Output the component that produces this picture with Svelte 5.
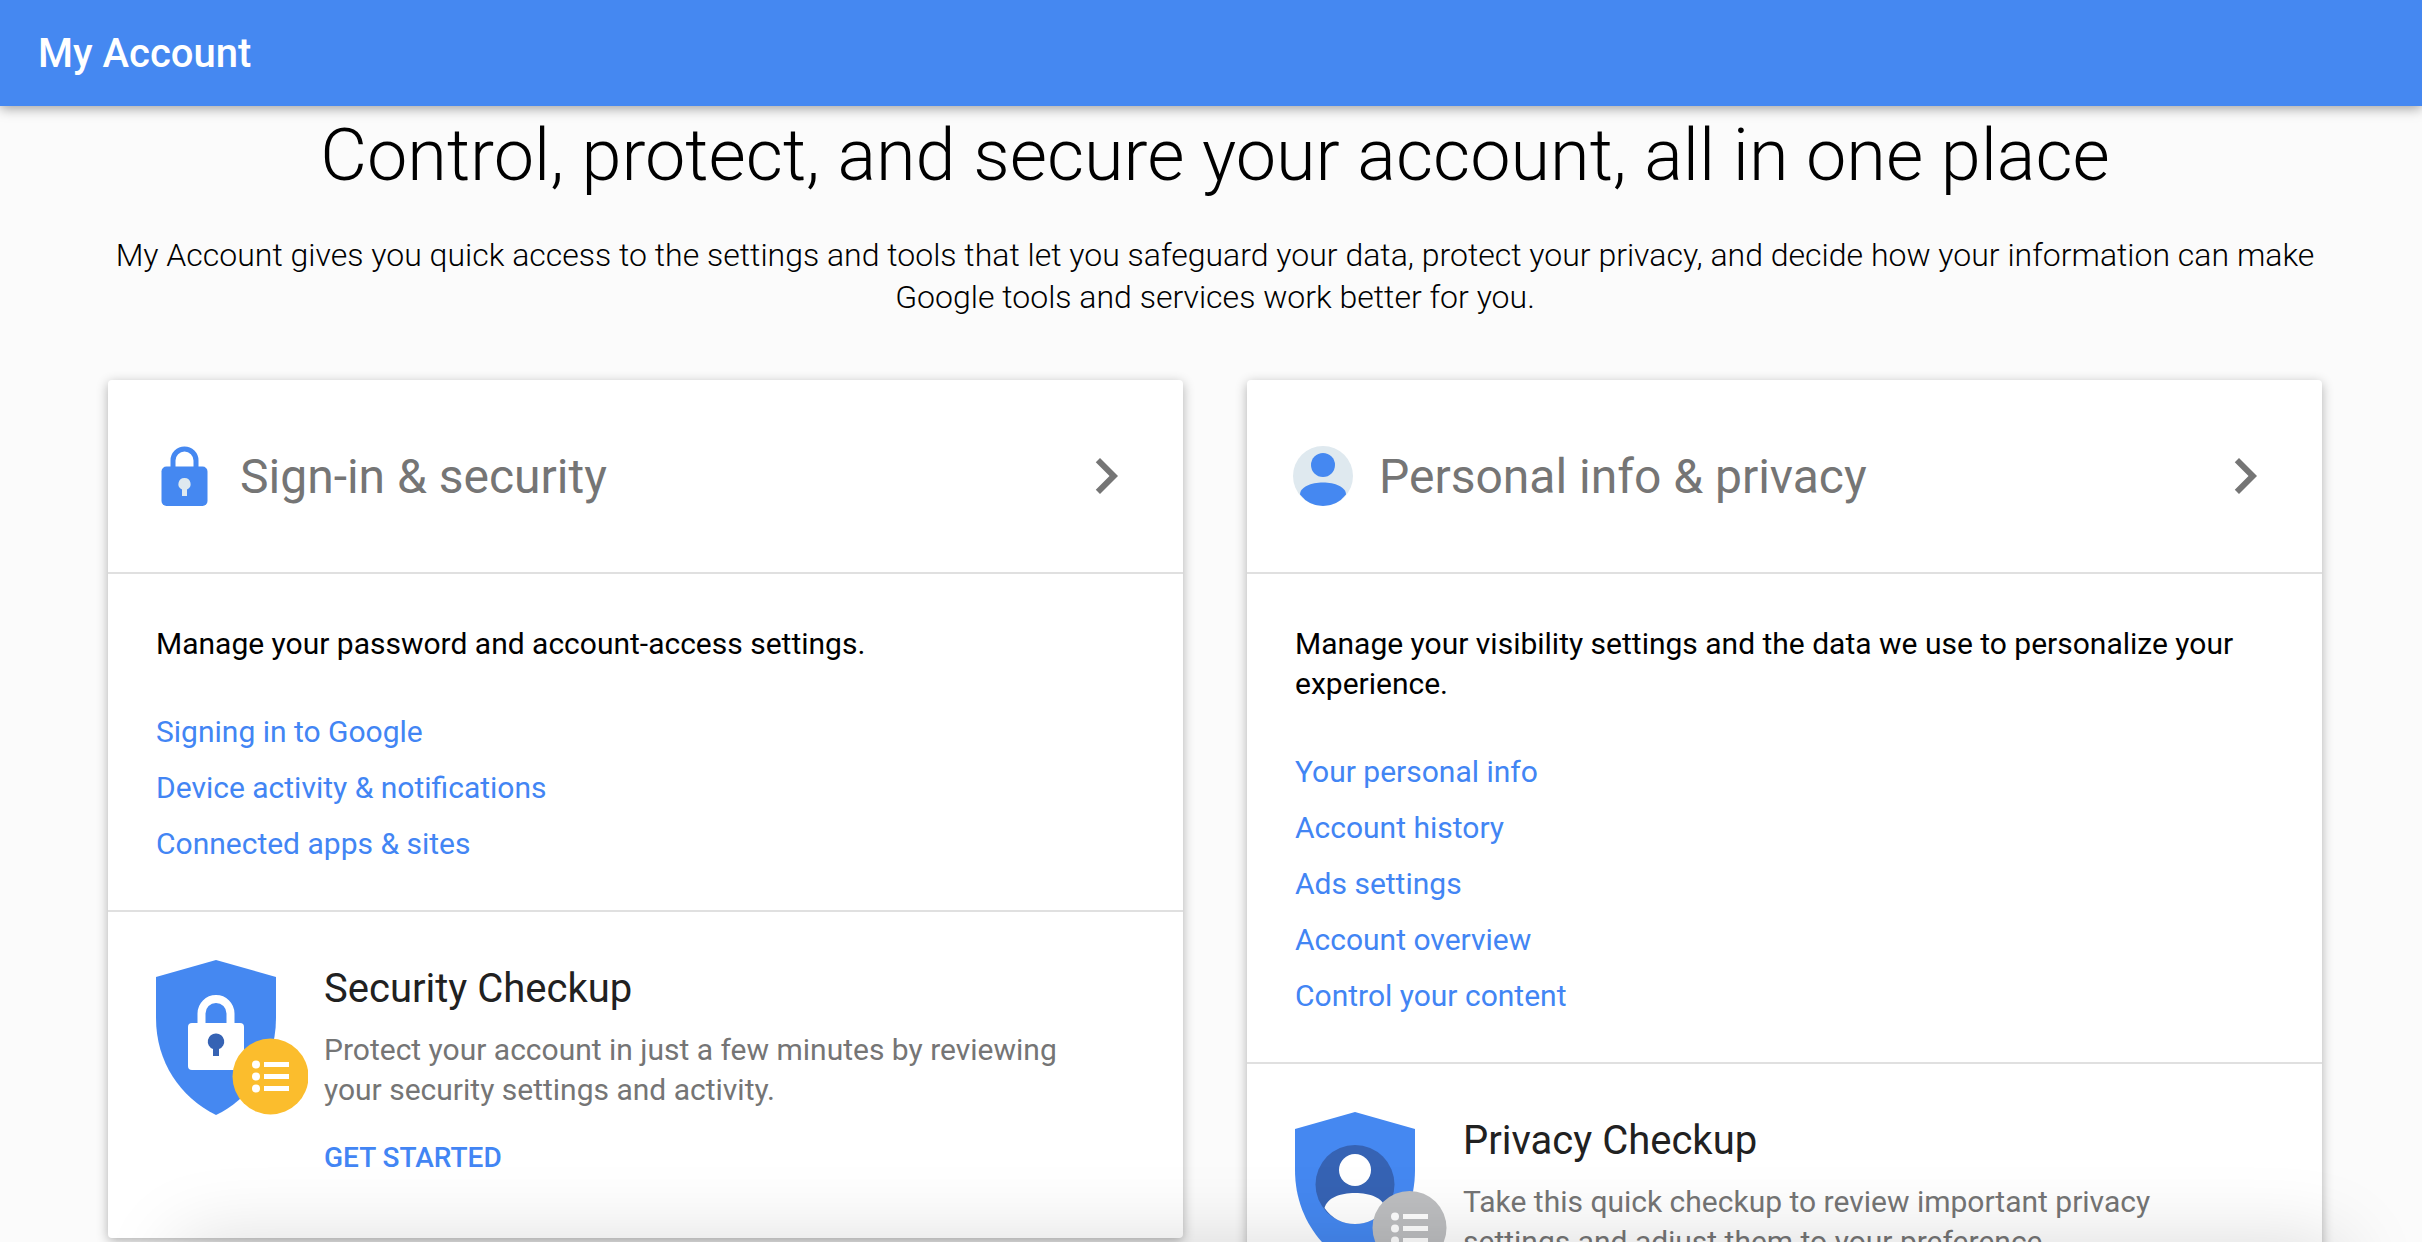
<script>
    const cards = [
        {
            title: "Sign-in & security",
            icon: "lock",
            summary: "Manage your password and account-access settings.",
            links: [
                "Signing in to Google",
                "Device activity & notifications",
                "Connected apps & sites",
            ],
            checkup: {
                title: "Security Checkup",
                text: "Protect your account in just a few minutes by reviewing your security settings and activity.",
            },
        },
        {
            title: "Personal info & privacy",
            icon: "person",
            summary:
                "Manage your visibility settings and the data we use to personalize your experience.",
            links: [
                "Your personal info",
                "Account history",
                "Ads settings",
                "Account overview",
                "Control your content",
            ],
            checkup: {
                title: "Privacy Checkup",
                text: "Take this quick checkup to review important privacy settings and adjust them to your preference.",
            },
        },
    ];
</script>

<div class="page">
    <header class="topbar">
        <a href="#home">My Account</a>
    </header>

    <main>
        <h1>Control, protect, and secure your account, all in one place</h1>
        <p class="intro">
            My Account gives you quick access to the settings and tools that let
            you safeguard your data, protect your privacy, and decide how your
            information can make Google tools and services work better for you.
        </p>

        <div class="cards">
            {#each cards as card}
                <section class="card">
                    <a class="card-head" href="#{card.icon}">
                        {#if card.icon === "lock"}
                            <svg class="icon" viewBox="0 0 60 60">
                                <path
                                    d="M19 22V14.500a11.500 11.500 0 0 1 23 0V22"
                                    fill="none"
                                    stroke="#4588f1"
                                    stroke-width="5"
                                />
                                <rect x="7.500" y="20.500" width="46" height="39.500" rx="5" fill="#4588f1" />
                                <path
                                    d="M30.500 32a6 6 0 0 1 2.500 11.500V50h-5v-6.500A6 6 0 0 1 30.500 32z"
                                    fill="#dfe9ef"
                                />
                            </svg>
                        {:else}
                            <svg class="icon" viewBox="0 0 60 60">
                                <circle cx="30" cy="30" r="30" fill="#dfe9ef" />
                                <circle cx="30" cy="19" r="12" fill="#4588f1" />
                                <path
                                    d="M7 48.500C7 41 18 36.500 30 36.500S53 41 53 48.500Q44 60 30 60T7 48.500z"
                                    fill="#4588f1"
                                />
                            </svg>
                        {/if}
                        <h2>{card.title}</h2>
                        <svg class="chevron" viewBox="0 0 24 24">
                            <path
                                d="M10 6L8.590 7.410 13.170 12l-4.580 4.590L10 18l6-6z"
                                fill="#757575"
                            />
                        </svg>
                    </a>

                    <div class="card-links">
                        <p>{card.summary}</p>
                        <ul>
                            {#each card.links as link}
                                <li><a href="#link">{link}</a></li>
                            {/each}
                        </ul>
                    </div>

                    <div class="checkup">
                        <svg class="shield" viewBox="0 0 152 155">
                            <path
                                d="M60 0L120 17V58C120 102 96 137 60 155C24 137 0 102 0 58V17z"
                                fill="#4588f1"
                            />
                            {#if card.icon === "lock"}
                                <path
                                    d="M45.500 66V53.500a14.500 14.500 0 0 1 29 0V66"
                                    fill="none"
                                    stroke="#fff"
                                    stroke-width="8"
                                />
                                <rect x="32" y="63" width="56" height="47" rx="4" fill="#fff" />
                                <path
                                    d="M60 73.500a8 8 0 0 1 3 15.500v7h-6v-7a8 8 0 0 1 3-15.500z"
                                    fill="#3663b4"
                                />
                                <circle cx="114.500" cy="116.500" r="38" fill="#fbbd2d" />
                            {:else}
                                <circle cx="60" cy="72.500" r="39.500" fill="#3663b4" />
                                <circle cx="60" cy="58" r="16" fill="#fff" />
                                <path
                                    d="M29.500 96C32 86 45 81 60 81S88 86 90.500 96Q79 112 60 112T29.500 96z"
                                    fill="#fff"
                                />
                                <circle cx="114.500" cy="116" r="37" fill="#bdbec0" />
                            {/if}
                            <g fill="#fff">
                                {#each [104.5, 116.5, 128.5] as y}
                                    <circle cx="100" cy={y} r="4" />
                                    <rect x="108" y={y - 2.5} width="25" height="5" />
                                {/each}
                            </g>
                        </svg>
                        <div class="checkup-body">
                            <h3>{card.checkup.title}</h3>
                            <p>{card.checkup.text}</p>
                            <a href="#start">GET STARTED</a>
                        </div>
                    </div>
                </section>
            {/each}
        </div>
    </main>

    <div class="bottom-shade"></div>
</div>

<style>
    :global(body) {
        margin: 0;
        background: #fbfbfb;
        font-family: Roboto, sans-serif;
        color: #000;
    }
    h1,
    h2,
    h3,
    p,
    ul {
        margin: 0;
        padding: 0;
        font-weight: 400;
    }
    ul {
        list-style: none;
    }
    a {
        color: #4285f4;
        text-decoration: none;
    }
    svg {
        flex: none;
        display: block;
    }
    .page {
        position: relative;
        height: 100vh;
        overflow: hidden;
    }
    .topbar {
        display: flex;
        align-items: center;
        height: 106px;
        padding: 0 38px;
        background: #4588f1;
        box-shadow: 0 2px 12px rgba(0, 0, 0, 0.4);
    }
    .topbar a {
        color: #fff;
        font-size: 40px;
        font-weight: 500;
    }
    main {
        padding: 8px 100px 0 108px;
    }
    h1 {
        font-size: 72px;
        font-weight: 300;
        line-height: 84px;
        text-align: center;
    }
    .intro {
        margin: 36px 0 62px;
        font-size: 32px;
        font-weight: 300;
        line-height: 42px;
        text-align: center;
    }
    .cards {
        display: grid;
        grid-template-columns: 1fr 1fr;
        align-items: start;
        gap: 64px;
    }
    .card {
        background: #fff;
        border-radius: 4px;
        box-shadow: 0 3px 12px rgba(0, 0, 0, 0.3);
    }
    .card-head {
        display: flex;
        align-items: center;
        height: 192px;
        padding: 0 41px 0 46px;
        border-bottom: 2px solid #e0e0e0;
    }
    .icon {
        width: 60px;
        height: 60px;
        margin-right: 26px;
    }
    .card-head h2 {
        flex: 1;
        color: #757575;
        font-size: 48px;
    }
    .chevron {
        width: 72px;
        height: 72px;
    }
    .card-links {
        padding: 50px 48px 38px;
        border-bottom: 2px solid #e0e0e0;
        font-size: 30px;
        line-height: 40px;
    }
    .card-links ul {
        margin-top: 40px;
    }
    .card-links li {
        line-height: 56px;
    }
    .checkup {
        display: flex;
        gap: 16px;
        padding: 48px 64px 60px 48px;
    }
    .shield {
        width: 152px;
        height: 155px;
    }
    .checkup h3 {
        color: #212121;
        font-size: 40px;
        line-height: 58px;
    }
    .checkup p {
        margin: 12px 0 28px;
        color: #757575;
        font-size: 30px;
        line-height: 40px;
    }
    .checkup a {
        display: block;
        font-size: 28px;
        font-weight: 500;
        line-height: 40px;
    }
    /* soft shadow rising from the lower edge of the window */
    .bottom-shade {
        position: absolute;
        top: 100%;
        left: 180px;
        right: 80px;
        height: 200px;
        box-shadow: 0 0 80px rgba(0, 0, 0, 0.15);
        pointer-events: none;
    }
</style>
